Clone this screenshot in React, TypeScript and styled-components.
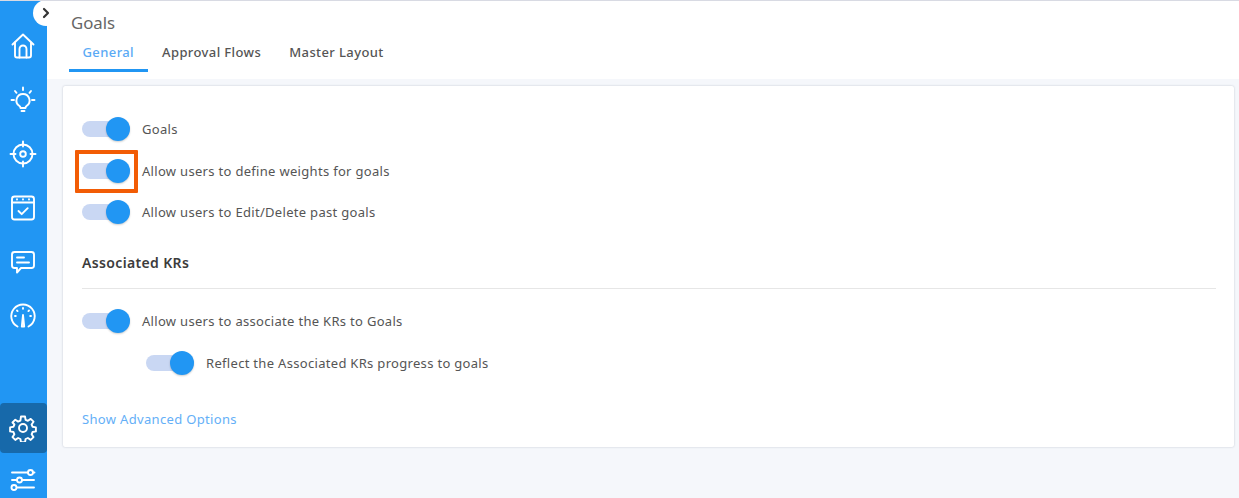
import { ReactNode } from 'react';
import styled, { createGlobalStyle } from 'styled-components';

const GlobalStyle = createGlobalStyle`
  html, body {
    margin: 0;
    padding: 0;
    height: 100%;
    overflow: hidden;
    font-family: "Noto Sans", "Open Sans", sans-serif;
  }
  #root { height: 100%; }
`;

const Page = styled.div`
  position: relative;
  display: flex;
  height: 498px;
  width: 1239px;
  overflow: hidden;
  background: #f5f7fb;
  border-top: 1px solid #d8dae3;
  box-sizing: border-box;
`;

const Sidebar = styled.nav`
  flex: 0 0 47px;
  display: flex;
  flex-direction: column;
  align-items: stretch;
  padding-top: 18px;
  box-sizing: border-box;
  background: #2196f3;
`;

const NavItem = styled.div<{ $active?: boolean }>`
  flex: 0 0 ${p => (p.$active ? 50 : 54)}px;
  display: flex;
  align-items: center;
  justify-content: center;
  margin-top: ${p => (p.$active ? 60 : 0)}px;
  padding-right: 2px;
  border-radius: ${p => (p.$active ? '4px' : '0')};
  background: ${p => (p.$active ? '#1769aa' : 'transparent')};
`;

const NavIcon = styled.svg`
  width: 28px;
  height: 28px;
  fill: none;
  stroke: #fff;
  stroke-width: 1.9;
  stroke-linecap: round;
  stroke-linejoin: round;
`;

const Collapse = styled.button`
  position: absolute;
  left: 33px;
  top: -1px;
  width: 26px;
  height: 26px;
  padding: 0;
  border: 0;
  border-radius: 50%;
  background: #fff;
  display: flex;
  align-items: center;
  justify-content: center;
`;

const Main = styled.main`
  flex: 1;
  min-width: 0;
  display: flex;
  flex-direction: column;
`;

const Header = styled.header`
  height: 78px;
  box-sizing: border-box;
  background: #fff;
  padding: 10px 0 0 22px;
`;

const Title = styled.h1`
  margin: 0 0 0 2px;
  font-size: 16.8px;
  line-height: 23px;
  font-weight: 400;
  color: #666;
`;

const Tabs = styled.div`
  display: flex;
  gap: 1px;
  margin-top: 6px;
`;

const Tab = styled.div<{ $active?: boolean }>`
  padding: 0 13.5px;
  height: 32px;
  line-height: 24px;
  font-size: 13px;
  font-weight: 500;
  letter-spacing: 0.4px;
  box-sizing: border-box;
  color: ${p => (p.$active ? '#5aaaf5' : '#555')};
  border-bottom: 3px solid ${p => (p.$active ? '#2196f3' : 'transparent')};
`;

const Card = styled.section`
  margin: 7px 5px 0 16px;
  height: 361px;
  padding: 22px 18px 0 19px;
  box-sizing: border-box;
  background: #fff;
  border-radius: 2px;
  box-shadow: 0 0 2px rgba(60, 70, 100, 0.3);
`;

const Row = styled.div<{ $nested?: boolean; $tight?: boolean }>`
  position: relative;
  display: flex;
  align-items: center;
  gap: 12px;
  height: ${p => (p.$tight ? 40 : 42)}px;
  padding-left: ${p => (p.$nested ? 64 : 0)}px;
`;

const Track = styled.span`
  position: relative;
  display: block;
  flex: 0 0 48px;
  height: 16px;
  border-radius: 8px;
  background: #c9d7f3;
`;

const Thumb = styled.span`
  position: absolute;
  right: 0;
  top: -4px;
  width: 24px;
  height: 24px;
  border-radius: 50%;
  background: #2196f3;
  box-shadow: 0 1px 2px rgba(0, 0, 0, 0.2);
`;

const Label = styled.span`
  font-size: 13px;
  letter-spacing: 0.31px;
  color: #555;
`;

const Highlight = styled.div`
  position: absolute;
  left: -7px;
  top: 0;
  width: 63px;
  height: 43px;
  box-sizing: border-box;
  border: 4px solid #f25c05;
  border-radius: 1px;
`;

const SectionTitle = styled.h2`
  margin: 19px 0 0;
  font-size: 14px;
  line-height: 24px;
  font-weight: 600;
  letter-spacing: 0.35px;
  color: #3c3c3c;
`;

const Divider = styled.hr`
  margin: 13px 0 11px;
  border: 0;
  border-top: 1px solid #e6e6e6;
`;

const AdvancedLink = styled.a`
  display: block;
  margin-top: 26px;
  font-size: 13px;
  letter-spacing: 0.33px;
  color: #64aff7;
`;

const Toggle = () => (
  <Track>
    <Thumb />
  </Track>
);

const Icon = ({ children }: { children: ReactNode }) => (
  <NavIcon viewBox="0 0 28 28">{children}</NavIcon>
);

export default function App() {
  return (
    <Page>
      <GlobalStyle />
      <Sidebar>
        <NavItem>
          <Icon>
            <path d="M3.500 12.500 14 2.500l10.500 10" />
            <path d="M6 10.500V23.500a2 2 0 0 0 2 2h12a2 2 0 0 0 2-2V10.500" />
            <path d="M10.500 25.500V17a3.500 3.500 0 0 1 7 0v8.500" />
          </Icon>
        </NavItem>
        <NavItem>
          <Icon>
            <path d="M14 8a6.500 6.500 0 0 0-3.800 11.800c.8.600 1.300 1.400 1.300 2.200h5c0-.8.500-1.600 1.300-2.200A6.500 6.500 0 0 0 14 8Z" />
            <path d="M12.500 25h3" />
            <path d="M14 1.500v2.500M6 5l1.500 1.800M22 5l-1.500 1.800M2.500 14H5M23 14h2.500" />
          </Icon>
        </NavItem>
        <NavItem>
          <Icon>
            <circle cx="14" cy="14" r="9.500" />
            <circle cx="14" cy="14" r="2.800" />
            <path d="M14 1.500v5M14 21.500v5M1.500 14h5M21.500 14h5" />
          </Icon>
        </NavItem>
        <NavItem>
          <Icon>
            <rect x="3" y="2.500" width="22" height="23" rx="2.500" />
            <path d="M3 8.500h22M8 5.200v.4M14 5.200v.4M20 5.200v.4" />
            <path d="m9.500 17 3.200 3.200 6-6" />
          </Icon>
        </NavItem>
        <NavItem>
          <Icon>
            <path d="M5.500 4h17A2.500 2.500 0 0 1 25 6.500v11a2.500 2.500 0 0 1-2.500 2.500H12l-4 4.500V20H5.500A2.500 2.500 0 0 1 3 17.500v-11A2.500 2.500 0 0 1 5.500 4Z" />
            <path d="M8 9.500h7M8 14.500h12" />
          </Icon>
        </NavItem>
        <NavItem>
          <Icon>
            <path d="M8.500 24.500a11.700 11.700 0 1 1 11 0" />
            <path d="M14 13 12.800 24.500h2.400Z" />
            <path d="M14 6v.8M8 8.500l.6.6M20 8.500l-.6.6M6 14h.8M21.200 14h.8" />
          </Icon>
        </NavItem>
        <NavItem $active>
          <Icon>
            <circle cx="14" cy="14" r="4" />
            <path d="M12 2.500h4l.6 3.300 2.300 1 2.800-1.900 2.800 2.800-1.900 2.800 1 2.300 3.300.6v4l-3.300.6-1 2.300 1.900 2.800-2.800 2.800-2.800-1.900-2.300 1-.6 3.300h-4l-.6-3.300-2.300-1-2.800 1.900-2.800-2.800 1.900-2.800-1-2.300-3.300-.6v-4l3.300-.6 1-2.300L3.500 8.500l2.800-2.800 2.800 1.900 2.300-1Z" />
          </Icon>
        </NavItem>
        <NavItem>
          <Icon>
            <path d="M3 6.500h16M24 6.500h1.500M3 14h5M13 14h12M8 21.500H25" />
            <circle cx="21.500" cy="6.500" r="2.500" />
            <circle cx="10.500" cy="14" r="2.500" />
            <circle cx="5" cy="21.500" r="2.500" />
          </Icon>
        </NavItem>
      </Sidebar>
      <Collapse>
        <svg width="12" height="12" viewBox="0 0 12 12" fill="none" stroke="#333" strokeWidth="2.2" strokeLinecap="round" strokeLinejoin="round">
          <path d="m4 2 4 4-4 4" />
        </svg>
      </Collapse>
      <Main>
        <Header>
          <Title>Goals</Title>
          <Tabs>
            <Tab $active>General</Tab>
            <Tab>Approval Flows</Tab>
            <Tab>Master Layout</Tab>
          </Tabs>
        </Header>
        <Card>
          <Row>
            <Toggle />
            <Label>Goals</Label>
          </Row>
          <Row>
            <Toggle />
            <Label>Allow users to define weights for goals</Label>
            <Highlight />
          </Row>
          <Row $tight>
            <Toggle />
            <Label>Allow users to Edit/Delete past goals</Label>
          </Row>
          <SectionTitle>Associated KRs</SectionTitle>
          <Divider />
          <Row>
            <Toggle />
            <Label>Allow users to associate the KRs to Goals</Label>
          </Row>
          <Row $nested>
            <Toggle />
            <Label>Reflect the Associated KRs progress to goals</Label>
          </Row>
          <AdvancedLink>Show Advanced Options</AdvancedLink>
        </Card>
      </Main>
    </Page>
  );
}
